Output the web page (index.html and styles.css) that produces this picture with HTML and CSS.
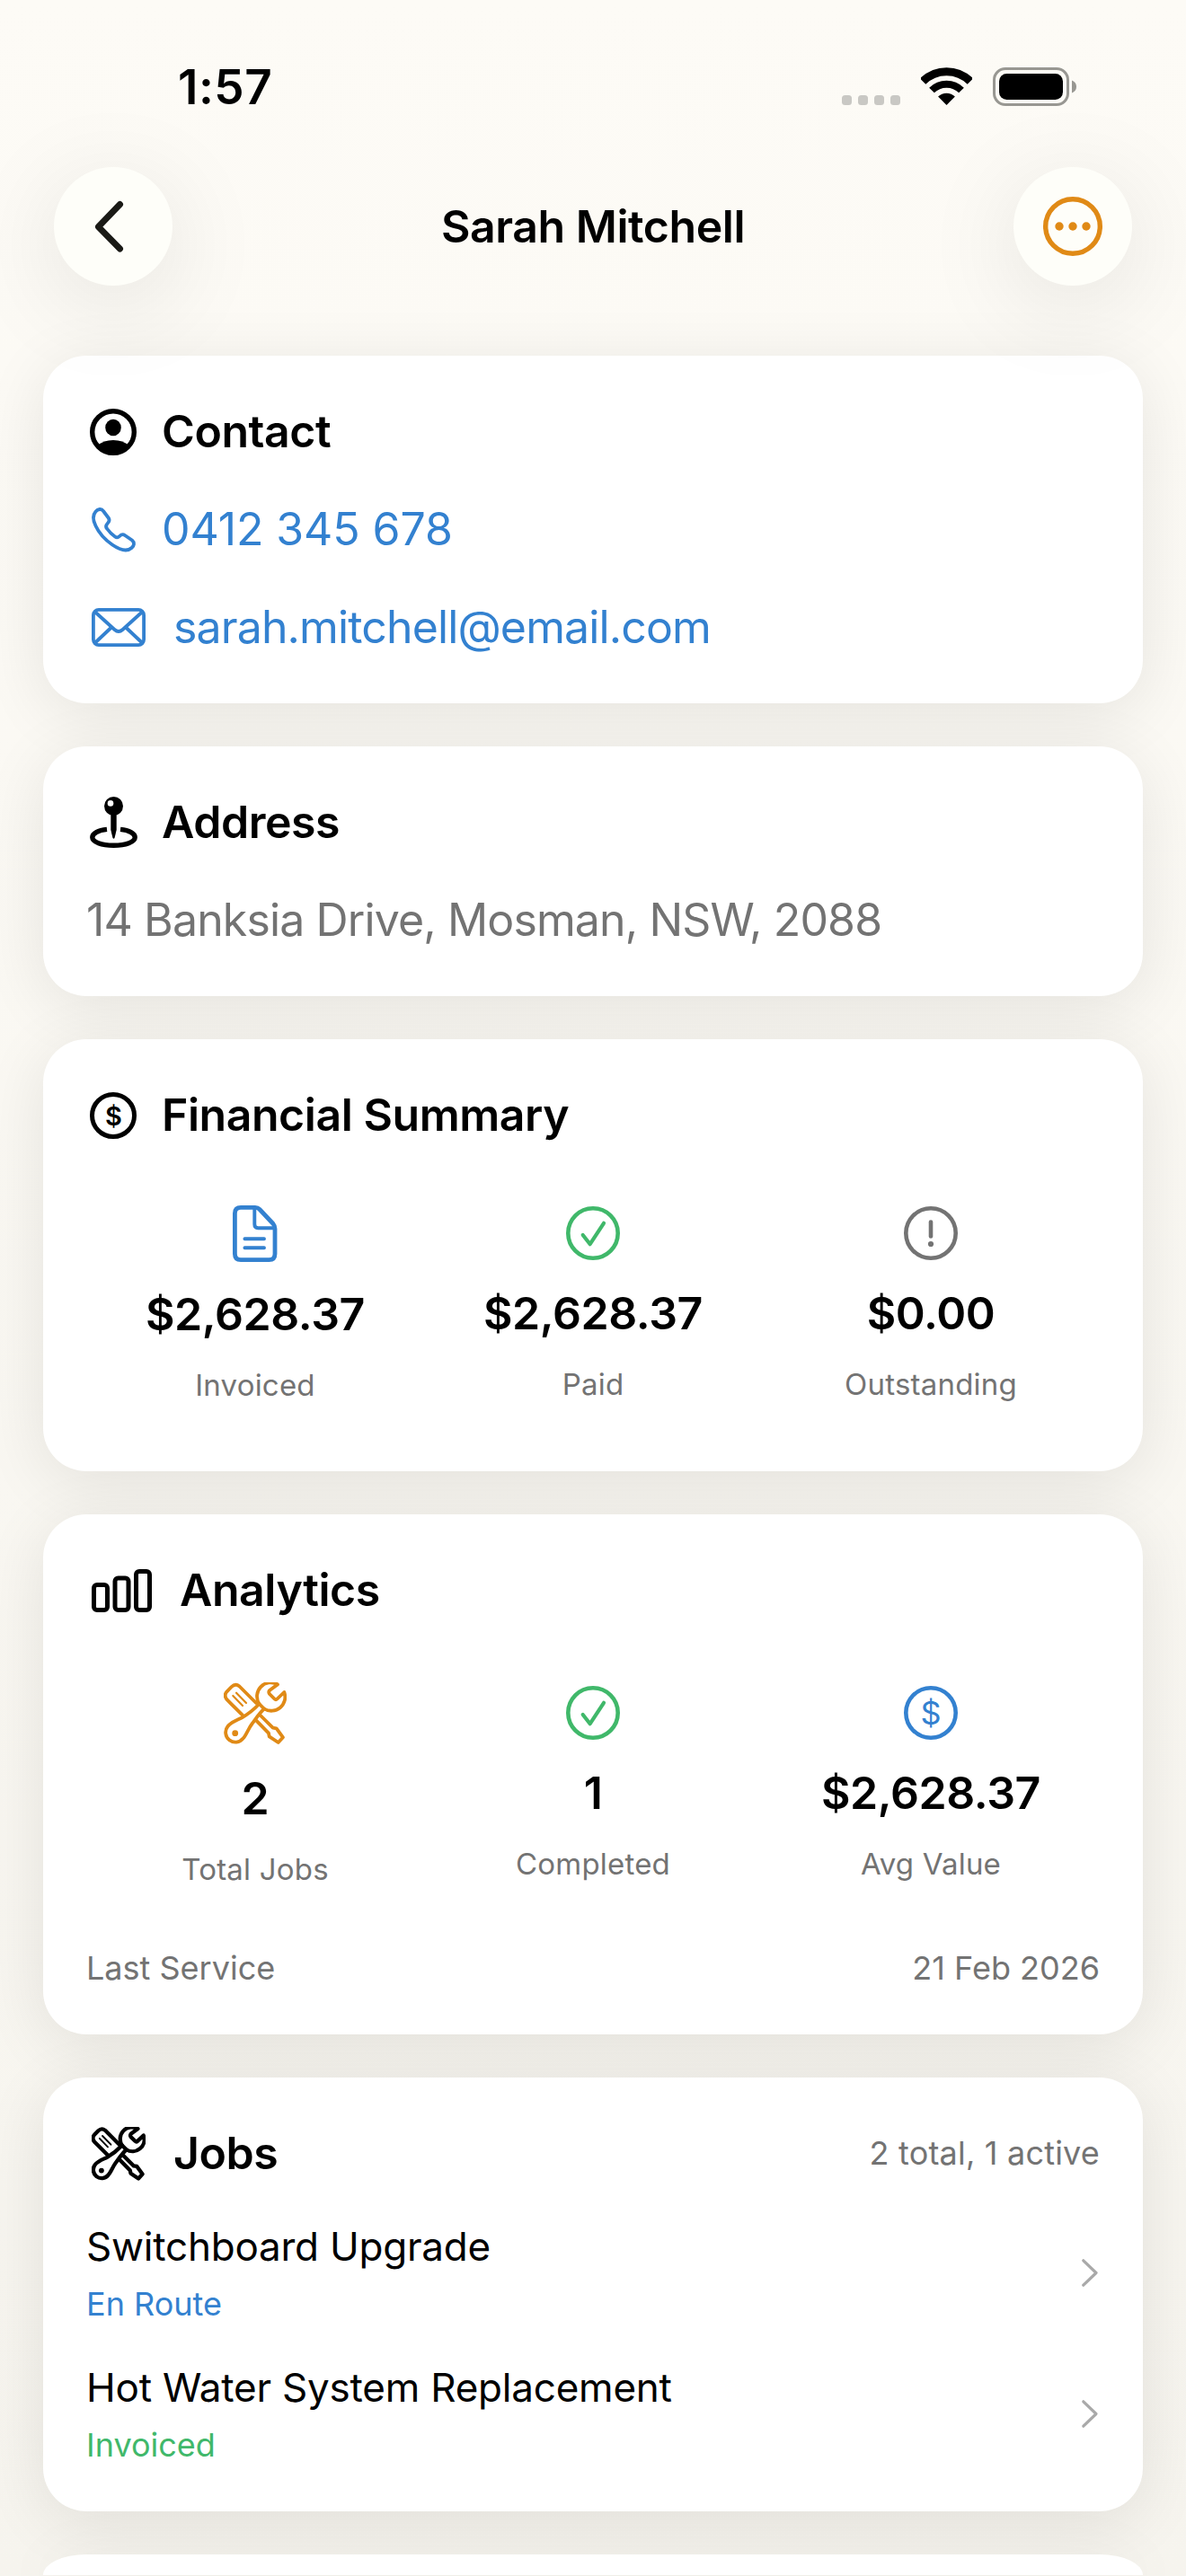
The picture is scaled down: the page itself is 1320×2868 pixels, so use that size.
FILE: index.html
```html
<!doctype html>
<html lang="en">
  <head>
    <meta charset="UTF-8">
    <meta name="viewport" content="width=device-width, initial-scale=1.0">
    <title>Sarah Mitchell</title>
    <link rel="stylesheet" href="styles.css">
  </head>
  <body>
    <!-- shared icons -->
    <svg class="sprite" aria-hidden="true">
      <symbol id="icon-check" viewBox="0 0 60 60">
        <circle cx="30" cy="30" r="27.7" stroke-width="4.6" />
        <path d="M18.7 32L26.7 42.2L42 18.8" stroke-width="4.2" />
      </symbol>
      <symbol id="icon-tools" viewBox="0 0 70 70">
        <path d="M21 36.7L3.5 19.2Q-.3 14.5 3.5 10.3L8.7 5Q13 .8 17.5 4.5L36 23" />
        <path d="M10.3 15L21 26M14 11.7L25 23" stroke-width="2.2" />
        <path d="M60 2.4A15.3 15.3 0 0 0 39.5 24C33 31 27 35.5 20 39.5C14 42.5 8 44.5 4.5 49A10.8 10.8 0 0 0 21.5 62.5C25 59 27 52 32 45.5C36 40 40 34 45 29.5A15.3 15.3 0 0 0 67.3 11L59.5 18.5Q58 20 56.5 18.5L51 13Q49.5 11 51 9Z" />
        <path d="M39.5 24L45 29.5" />
        <path d="M41 37L54.7 50.7L58.7 51.3L66 61.3L60.7 67L50.7 60.3L50 56.7L36.3 42.7" />
        <circle cx="12.7" cy="56.7" r="3.4" fill="currentColor" stroke="none" />
      </symbol>
    </svg>

    <div class="status-bar">
      <span class="time">1:57</span>
      <div class="status-icons">
        <svg width="65" height="44" viewBox="0 0 65 44" fill="#c9c8c4">
          <rect x="0" y="31" width="11" height="11" rx="3.5" />
          <rect x="18" y="31" width="11" height="11" rx="3.5" />
          <rect x="36" y="31" width="11" height="11" rx="3.5" />
          <rect x="54" y="31" width="11" height="11" rx="3.5" />
        </svg>
        <svg width="57" height="44" viewBox="0 0 57 44" fill="none" stroke="#000">
          <path d="M2.1 15.6A37.3 37.3 0 0 1 54.9 15.6" stroke-width="9" />
          <path d="M12 25.5A23.3 23.3 0 0 1 45 25.5" stroke-width="8" />
          <path d="M28.5 42L19.1 32.6A13.3 13.3 0 0 1 37.9 32.6Z" fill="#000" stroke="none" />
        </svg>
        <svg width="93" height="44" viewBox="0 0 93 44">
          <rect x="1.5" y="1.5" width="82" height="40" rx="12.5" fill="none" stroke="#989792" stroke-width="3" />
          <rect x="7" y="7" width="71" height="29" rx="8.5" />
          <path d="M88 14.5Q93 16.5 93 21.5T88 28.5Z" fill="#989792" />
        </svg>
      </div>
    </div>

    <div class="nav">
      <button class="nav-button">
        <svg width="36" height="60" viewBox="0 0 36 60" class="icon" stroke-width="7">
          <path d="M29.5 5.5L5.5 30.5L29.5 55" />
        </svg>
      </button>
      <h1>Sarah Mitchell</h1>
      <button class="nav-button accent">
        <svg width="66" height="66" viewBox="0 0 66 66" class="icon" stroke-width="5.4">
          <circle cx="33" cy="33" r="30.3" />
          <g fill="currentColor" stroke="none">
            <circle cx="18" cy="33" r="4.7" />
            <circle cx="33" cy="33" r="4.7" />
            <circle cx="48" cy="33" r="4.7" />
          </g>
        </svg>
      </button>
    </div>

    <div class="cards">
      <div class="card">
        <div class="row">
          <svg width="56" height="52" viewBox="-4 0 56 52" class="icon" stroke-width="5.4">
            <circle cx="26" cy="26" r="23.3" />
            <g fill="currentColor" stroke="none">
              <ellipse cx="26" cy="21" rx="8.8" ry="9.3" />
              <path d="M8.5 41Q15 35 26 35T43.5 41Q36 50 26 50T8.5 41Z" />
            </g>
          </svg>
          <h2>Contact</h2>
        </div>
        <div class="row link phone">
          <svg width="56" height="50" viewBox="-6 0 56 50" class="icon" stroke-width="3.8">
            <path d="M4.5 4.5C7 1.5 11 1 13 4L19 12C20.5 14.5 19.5 16 17.5 18C15.5 20 15.5 21.5 17 23.5C19.5 27 22.5 30 26 32.5C28 34 29.5 33.5 31 32C33 30 35 29.5 37 31L45 36.5C48 39 47.5 42.5 44.5 45C40 49 32.5 48 23 41.5C15 36 8 28 4.5 20.5C1 13.5 1 8.5 4.5 4.5Z" />
          </svg>
          <span>0412 345 678</span>
        </div>
        <div class="row link">
          <svg width="69" height="43" viewBox="-6 0 69 43" class="icon" stroke-width="3.8">
            <rect x="1.9" y="1.9" width="56.2" height="39.2" rx="6" />
            <path d="M4 4.5L25.5 24Q30 28 34.5 24L56 4.5M4 38.5L22 21.5M56 38.5L38 21.5" />
          </svg>
          <span>sarah.mitchell@email.com</span>
        </div>
      </div>

      <div class="card">
        <div class="row">
          <svg width="56" height="57" viewBox="-4 0 56 57" class="icon" stroke-width="5.4">
            <path d="M19 36.4C9 37.5 2.8 41 2.8 45.3C2.8 50.5 13 54.2 26.5 54.2S50.2 50.5 50.2 45.3C50.2 41 44 37.5 34 36.4" stroke-linecap="butt" />
            <path d="M23.3 19H29.7V37L27.5 46Q26.5 47.5 25.5 46L23.3 37Z" fill="currentColor" stroke="none" />
            <circle cx="26.5" cy="10.5" r="10.5" fill="currentColor" stroke="none" />
            <circle cx="23" cy="7.4" r="3.3" fill="#fff" stroke="none" />
          </svg>
          <h2>Address</h2>
        </div>
        <div class="row">
          <span class="muted">14 Banksia Drive, Mosman, NSW, 2088</span>
        </div>
      </div>

      <div class="card">
        <div class="row">
          <svg width="56" height="52" viewBox="-4 0 56 52" class="icon" stroke-width="5">
            <circle cx="26" cy="26" r="23.5" />
            <text class="dollar" x="26" y="36.5" font-size="29" font-weight="600">$</text>
          </svg>
          <h2>Financial Summary</h2>
        </div>
        <div class="stats">
          <div class="stat">
            <svg width="50" height="62" viewBox="0 0 50 62" class="icon tall blue" stroke-width="4.8">
              <path d="M2.4 9Q2.4 2.4 9 2.4H25Q28 2.4 30 4.5L45 20.5Q47 22.8 47 26V54Q47 60.6 40.5 60.6H9Q2.4 60.6 2.4 54Z" />
              <path d="M24.3 3V21Q24.3 25.2 28.3 25.2H46M13.4 37.3H35M13.4 47.3H35" stroke-width="3.9" />
            </svg>
            <div class="value">$2,628.37</div>
            <div class="label">Invoiced</div>
          </div>
          <div class="stat">
            <svg width="60" height="60" class="icon green"><use href="#icon-check" /></svg>
            <div class="value">$2,628.37</div>
            <div class="label">Paid</div>
          </div>
          <div class="stat">
            <svg width="60" height="60" viewBox="0 0 60 60" class="icon muted" stroke-width="4.6">
              <circle cx="30" cy="30" r="27.7" />
              <path d="M30 17.5V33.5" />
              <circle cx="30" cy="42" r="3.1" fill="currentColor" stroke="none" />
            </svg>
            <div class="value">$0.00</div>
            <div class="label">Outstanding</div>
          </div>
        </div>
      </div>

      <div class="card">
        <div class="row">
          <svg width="76" height="48" viewBox="-6 0 76 48" class="icon" stroke-width="5">
            <rect x="2.5" y="17.5" width="15" height="28" rx="3.5" />
            <rect x="26" y="10" width="15" height="35.5" rx="3.5" />
            <rect x="49.5" y="2.5" width="15" height="43" rx="3.5" />
          </svg>
          <h2>Analytics</h2>
        </div>
        <div class="stats analytics">
          <div class="stat">
            <svg width="70" height="70" class="icon wide orange" stroke-width="3.8"><use href="#icon-tools" /></svg>
            <div class="value">2</div>
            <div class="label">Total Jobs</div>
          </div>
          <div class="stat">
            <svg width="60" height="60" class="icon green"><use href="#icon-check" /></svg>
            <div class="value">1</div>
            <div class="label">Completed</div>
          </div>
          <div class="stat">
            <svg width="60" height="60" viewBox="0 0 60 60" class="icon blue" stroke-width="4.6">
              <circle cx="30" cy="30" r="27.7" />
              <text class="dollar" x="30" y="43" font-size="36">$</text>
            </svg>
            <div class="value">$2,628.37</div>
            <div class="label">Avg Value</div>
          </div>
        </div>
        <div class="last-service">
          <span>Last Service</span>
          <span>21 Feb 2026</span>
        </div>
      </div>

      <div class="card">
        <div class="row">
          <svg width="69" height="60" viewBox="-6 0 69 60" class="icon" stroke-width="5"><use href="#icon-tools" width="60" height="60" /></svg>
          <h2>Jobs</h2>
          <span class="count">2 total, 1 active</span>
        </div>
        <div class="jobs">
          <div class="job">
            <div>
              <div class="job-title">Switchboard Upgrade</div>
              <div class="job-status blue">En Route</div>
            </div>
            <svg width="18" height="31" viewBox="0 0 18 31" class="icon chevron" stroke-width="3.2">
              <path d="M1.8 1.8L16 15.5L1.8 29.2" />
            </svg>
          </div>
          <div class="job">
            <div>
              <div class="job-title">Hot Water System Replacement</div>
              <div class="job-status green">Invoiced</div>
            </div>
            <svg width="18" height="31" viewBox="0 0 18 31" class="icon chevron" stroke-width="3.2">
              <path d="M1.8 1.8L16 15.5L1.8 29.2" />
            </svg>
          </div>
        </div>
      </div>

      <div class="card next"></div>
    </div>
  </body>
</html>
```
FILE: styles.css
```css
* {
  margin: 0;
  padding: 0;
  box-sizing: border-box;
}

body {
  width: 1320px;
  height: 2868px;
  overflow: hidden;
  font-family: Inter, "Liberation Sans", sans-serif;
  font-size: 50px;
  line-height: 61px;
  color: #000000;
  background: linear-gradient(#fdfbf6, #f6f4ee);
}

.sprite {
  display: none;
}

.icon {
  flex-shrink: 0;
  fill: none;
  stroke: currentColor;
  stroke-linecap: round;
  stroke-linejoin: round;
  overflow: visible;
}

.dollar {
  fill: currentColor;
  stroke: none;
  text-anchor: middle;
}

.blue {
  color: #3381d0;
}

.green {
  color: #40b86a;
}

.orange {
  color: #e08a16;
}

.muted {
  color: #737373;
}

/* Status bar */
.status-bar {
  height: 186px;
  padding: 8px 122px 0 198px;
  display: flex;
  align-items: center;
  justify-content: space-between;
}

.time {
  font-size: 53px;
  font-weight: 600;
  letter-spacing: 0.5px;
}

.status-icons {
  display: flex;
  gap: 23px;
}

/* Navigation */
.nav {
  display: flex;
  align-items: center;
  justify-content: space-between;
  padding: 0 60px;
  margin-bottom: 78px;
}

.nav-button {
  position: relative;
  z-index: 1;
  width: 132px;
  height: 132px;
  display: flex;
  align-items: center;
  justify-content: center;
  border: none;
  border-radius: 50%;
  color: #1a1a16;
  background: #fefef9;
  box-shadow: 0 20px 110px rgba(0, 0, 0, 0.1);
}

.nav-button:first-child {
  padding-right: 9px;
}

.nav-button.accent {
  color: #e08a16;
}

h1,
h2 {
  font-size: 50px;
  font-weight: 600;
  letter-spacing: -0.45px;
}

/* Cards */
.cards {
  display: flex;
  flex-direction: column;
  gap: 48px;
  padding: 0 48px;
}

.card {
  padding: 54px 48px 52px;
  border-radius: 48px;
  background: #ffffff;
  box-shadow: 0 12px 72px rgba(0, 0, 0, 0.09);
}

/* only the top edge is in view */
.card.next {
  height: 23px;
  padding: 0;
  border-radius: 48px 48px 0 0 / 23px 23px 0 0;
}

.row {
  display: flex;
  align-items: center;
  gap: 28px;
  height: 61px;
  white-space: nowrap;
  letter-spacing: -0.87px;
}

.row + .row {
  margin-top: 48px;
}

.row:last-child {
  margin-bottom: 2px;
}

.link {
  color: #3381d0;
}

.phone {
  letter-spacing: -0.1px;
}

.count {
  margin-left: auto;
  font-size: 36px;
  letter-spacing: 0.2px;
  color: #737373;
}

/* Stats */
.stats {
  display: grid;
  grid-template-columns: repeat(3, 1fr);
  margin: 71px 0 24px;
}

.stats.analytics {
  margin: 76px 0 68px;
}

.stat {
  display: flex;
  flex-direction: column;
  align-items: center;
}

.tall {
  margin-top: -1px;
}

.wide {
  margin-top: -4px;
}

.value {
  margin: 29px 0 28px;
  font-weight: 600;
  letter-spacing: -0.4px;
}

.label {
  font-size: 33px;
  line-height: 40px;
  letter-spacing: 0.2px;
  color: #737373;
}

.last-service {
  display: flex;
  justify-content: space-between;
  font-size: 36px;
  line-height: 44px;
  color: #737373;
}

/* Jobs */
.jobs {
  display: flex;
  flex-direction: column;
  gap: 44px;
  margin-top: 46px;
}

.job {
  display: flex;
  align-items: center;
  justify-content: space-between;
  padding-right: 2px;
}

.job-title {
  font-size: 44px;
  line-height: 54px;
  letter-spacing: -0.22px;
  margin-bottom: 15px;
}

.job-status {
  font-size: 36px;
  line-height: 44px;
}

.chevron {
  color: #a9a9a9;
}
```
